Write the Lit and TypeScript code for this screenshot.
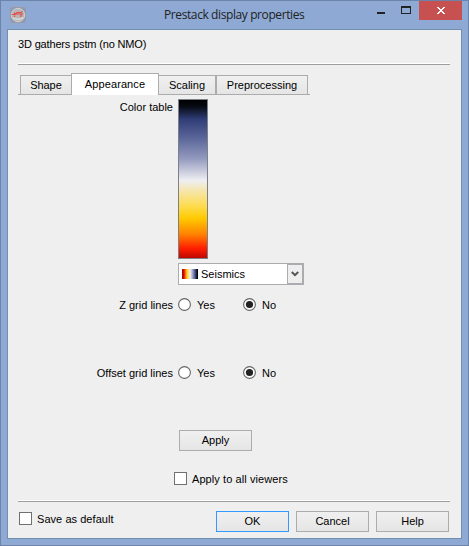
import { LitElement, html, css, svg } from "lit";
import { customElement, property } from "lit/decorators.js";

@customElement("tick-option")
class TickOption extends LitElement {
  @property() kind = "radio";
  @property({ type: Boolean }) checked = false;
  static styles = css`
    :host { display: flex; align-items: center; height: 13px; white-space: nowrap; }
    svg { display: block; flex: none; width: 13px; height: 13px; margin-right: 5px; }
    :host([kind="radio"]) svg { margin-right: 6px; }
    .text { padding-top: 2px; }
  `;
  render() {
    return html`<svg viewBox="0 0 13 13">
        ${this.kind === "radio"
          ? svg`<circle cx="6.5" cy="6.5" r="5.9" fill="#fff" stroke="#666" stroke-width="1.1"/>
              ${this.checked ? svg`<circle cx="6.5" cy="6.5" r="3.6" fill="#222"/>` : ""}`
          : svg`<rect x=".5" y=".5" width="12" height="12" fill="#fff" stroke="#707070"/>`}
      </svg><span class="text"><slot></slot></span>`;
  }
}

@customElement("push-button")
class PushButton extends LitElement {
  static styles = css`
    :host { display: flex; align-items: center; justify-content: center; box-sizing: border-box;
      width: 73px; height: 21px; border: 1px solid #acacac;
      background: linear-gradient(#f0f0f0, #e5e5e5); }
    :host([primary]) { border-color: #3399ff; }
  `;
  render() { return html`<slot></slot>`; }
}

@customElement("app-root")
class AppRoot extends LitElement {
  static styles = css`
    :host { display: block; width: 469px; height: 546px; font: 11px/13px "Liberation Sans", Arial, sans-serif; color: #000; }
    * { box-sizing: border-box; }
    .window { display: flex; flex-direction: column; height: 546px; background: #8da9d4; border: 1px solid #6d84aa; padding: 0 6px 6px; }
    .title { display: flex; height: 28px; flex: none; }
    .logo { display: block; width: 16px; height: 16px; margin: 6px 0 0 3px; }
    .caption { flex: 1; font: 12px/16px "Open Sans", "Noto Sans", sans-serif; color: #222; margin: 6px 0 0 138px; white-space: nowrap; letter-spacing: -0.4px; }
    .controls { display: block; width: 100px; height: 19px; flex: none; margin-right: -6px; }
    .client { flex: 1; min-height: 0; background: #efefef; border: 1px solid #7190b0; padding: 0 11px 0 10px; display: flex; flex-direction: column; }
    .heading { height: 33px; padding-top: 8px; flex: none; letter-spacing: -0.16px; }
    .rule { height: 2px; flex: none; border-top: 1px solid #fff; border-bottom: 1px solid #9d9d9d; }
    .tabs { display: flex; align-items: flex-end; width: 292px; height: 30px; flex: none; padding-left: 2px; box-shadow: inset 0 -1px #a5a5a5; }
    .tab { height: 20px; border: 1px solid #acacac; background: linear-gradient(#f0f0f0, #e5e5e5); display: flex; align-items: center; justify-content: center; }
    .shape { width: 51px; border-right: 0; letter-spacing: -0.1px; }
    .appearance { width: 88px; height: 22px; background: #fff; border-bottom: 0; padding-bottom: 1px; letter-spacing: 0.1px; }
    .scaling { width: 57px; border-left: 0; }
    .pre { width: 92px; }
    .row { display: grid; grid-template-columns: 155px auto; column-gap: 5px; }
    .label { text-align: right; white-space: nowrap; }
    .color { height: 164px; padding-top: 4px; flex: none; }
    .color .label { padding-top: 2px; }
    .bar { width: 30px; height: 160px; border: 1px solid #7c8087;
      background: linear-gradient(#000 0, #070a12 4%, #2f3c76 12%, #5a6699 24%, #9399be 37%, #efeff2 51%, #f6e5a6 58%, #fddc50 67%, #ffc900 75%, #ff8200 85%, #ff1d00 94%, #bd0800 100%); }
    .combo { display: flex; align-items: center; width: 126px; height: 22px; margin: 4px 0 0 160px; flex: none; background: #fff; border: 1px solid #acacb0; padding-left: 3px; }
    .swatch { width: 16px; height: 10px; margin-right: 3px;
      background: linear-gradient(90deg, #b50000 0 7%, #ed3300 16%, #ffac00 27%, #ffdf68 38%, #ededed 52%, #a9afce 64%, #5e6b9e 77%, #263265 88%, #000 96%); }
    .drop { display: block; width: 16px; height: 20px; margin-left: auto; }
    .options { display: grid; grid-template-columns: 65px auto; }
    .choice { height: 13px; flex: none; }
    .choice .label { padding-top: 1px; }
    .z { margin-top: 13px; }
    .offset { margin-top: 55px; }
    .apply { margin: 51px 0 0 161px; flex: none; }
    .all { margin: 21px 0 15px 156px; flex: none; letter-spacing: 0.08px; }
    .footer { display: flex; padding: 9px 1px 0 1px; }
    .save { margin-top: 1px; margin-right: auto; letter-spacing: 0.05px; }
    .buttons { display: flex; gap: 7px; }
  `;

  choices(name: string, cls: string) {
    return html`<div class="row choice ${cls}">
      <div class="label">${name}</div>
      <div class="options"><tick-option kind="radio">Yes</tick-option><tick-option kind="radio" checked>No</tick-option></div>
    </div>`;
  }

  render() {
    return html`<div class="window">
      <div class="title">
        <svg class="logo" viewBox="0 0 16 16">
          <rect x=".5" y=".5" width="15" height="15" rx="2" fill="#8b9bb8" stroke="#9b98a6"/>
          <circle cx="8" cy="8" r="6.7" fill="#b7b5b5" stroke="#d3d0cd"/>
          <path d="M3 10.5Q8 14 13 10.5" fill="none" stroke="#ddd" stroke-width="1.5"/>
          <path d="M1.5 7.5H5L7 5.5H11L12.5 4.5M4 6.2L7 7H13M5 8.5L4 10M11 7V10" fill="none" stroke="#e64a4a" stroke-width="1.2"/>
        </svg>
        <div class="caption">Prestack display properties</div>
        <svg class="controls" viewBox="0 0 100 19" shape-rendering="crispEdges">
          <rect x="9" y="11" width="8" height="2" fill="#222"/>
          <path d="M33 5h10v8H33zM34 7v5h8V7z" fill="#222" fill-rule="evenodd"/>
          <rect x="51" y="0" width="43" height="19" fill="#c75050"/>
          <path d="M69 6h2v1h1v1h2V7h1V6h2v1h-1v1h-1v1h-1v1h1v1h1v1h1v1h-2v-1h-1v-1h-2v1h-1v1h-2v-1h1v-1h1v-1h1V9h-1V8h-1V7h-1z" fill="#fff"/>
        </svg>
      </div>
      <div class="client">
        <div class="heading">3D gathers pstm (no NMO)</div>
        <div class="rule"></div>
        <div class="tabs">
          <div class="tab shape">Shape</div>
          <div class="tab appearance">Appearance</div>
          <div class="tab scaling">Scaling</div>
          <div class="tab pre">Preprocessing</div>
        </div>
        <div class="row color"><div class="label">Color table</div><div class="bar"></div></div>
        <div class="combo"><div class="swatch"></div>Seismics
          <svg class="drop" viewBox="0 0 16 20"><rect x=".5" y=".5" width="15" height="19" fill="#eee" stroke="#acacb0"/>
            <path d="M4.8 8L8 11.2L11.2 8" fill="none" stroke="#555" stroke-width="2"/></svg>
        </div>
        ${this.choices("Z grid lines", "z")}
        ${this.choices("Offset grid lines", "offset")}
        <push-button class="apply">Apply</push-button>
        <tick-option class="all" kind="check">Apply to all viewers</tick-option>
        <div class="rule"></div>
        <div class="footer">
          <tick-option class="save" kind="check">Save as default</tick-option>
          <div class="buttons"><push-button primary>OK</push-button><push-button>Cancel</push-button><push-button>Help</push-button></div>
        </div>
      </div>
    </div>`;
  }
}
